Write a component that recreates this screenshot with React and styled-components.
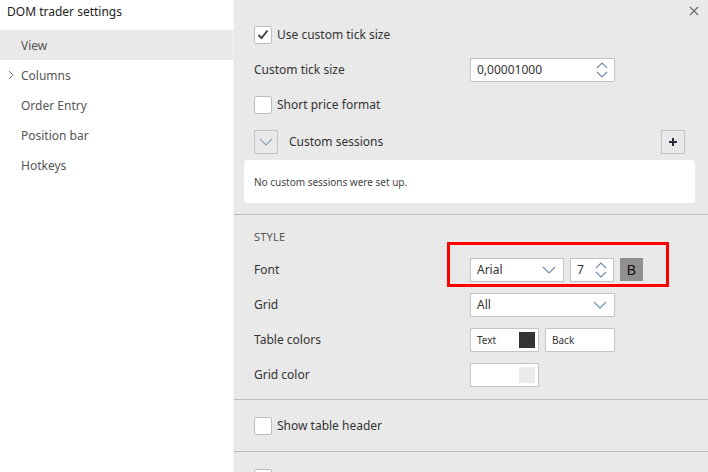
import React from 'react';
import styled, { createGlobalStyle } from 'styled-components';

const GlobalStyle = createGlobalStyle`
  html, body {
    margin: 0;
    padding: 0;
    background: #e9e9e9;
  }
  body {
    font-family: "Noto Sans", "Open Sans", sans-serif;
    color: #333;
  }
`;

const Window = styled.div`
  display: flex;
  width: 708px;
  height: 472px;
  overflow: hidden;
`;

const Sidebar = styled.aside`
  width: 233px;
  flex: none;
  background: #fff;
  border-right: 1px solid #f2f2f2;
`;

const Title = styled.div`
  height: 30px;
  padding: 3px 0 0 7px;
  box-sizing: border-box;
  font-size: 12px;
  color: #222;
`;

const NavItem = styled.div`
  position: relative;
  height: 30px;
  display: flex;
  align-items: center;
  padding-left: 21px;
  font-size: 12px;
  color: #555;
  background: ${p => (p.$active ? '#e9e9e9' : 'transparent')};
`;

const NavChevron = styled.svg`
  position: absolute;
  left: 8px;
  top: 10px;
`;

const Content = styled.main`
  flex: 1;
  position: relative;
  background: #e9e9e9;
`;

const CloseButton = styled.svg`
  position: absolute;
  top: 6px;
  right: 9px;
`;

const Section = styled.section`
  padding: ${p => p.$pad || '0'};
  border-bottom: ${p => (p.$last ? 'none' : '1px solid #bdbdbd')};
`;

const Row = styled.div`
  height: 35px;
  display: flex;
  align-items: center;
  padding-left: 20px;
  padding-right: ${p => (p.$right ? '23px' : '0')};
  margin-top: ${p => p.$mt || 0}px;
  font-size: 12px;
  color: #333;
`;

const Label = styled.div`
  width: 216px;
  flex: none;
`;

const Heading = styled.div`
  height: 16px;
  line-height: 16px;
  padding-left: 20px;
  margin-bottom: 7px;
  font-size: 11px;
  color: #555;
  letter-spacing: 0.2px;
`;

const Check = styled.div`
  width: 18px;
  height: 18px;
  box-sizing: border-box;
  border: 1px solid #bdbdbd;
  border-radius: 2px;
  background: #fff;
  margin-right: 5px;
  display: flex;
  align-items: center;
  justify-content: center;
`;

const Field = styled.div`
  width: ${p => p.$w}px;
  height: 24px;
  box-sizing: border-box;
  border: 1px solid #c4c4c4;
  background: #fff;
  display: flex;
  align-items: center;
  justify-content: space-between;
  padding: 0 ${p => p.$pr || 6}px 0 6px;
  margin-right: ${p => p.$mr || 0}px;
  font-size: ${p => p.$fs || 12}px;
  color: #333;
`;

const Swatch = styled.div`
  width: 16px;
  height: 16px;
  background: ${p => p.$c};
`;

const IconButton = styled.div`
  width: 24px;
  height: 24px;
  box-sizing: border-box;
  border: 1px solid #c4c4c4;
  display: flex;
  align-items: center;
  justify-content: center;
  background: #e9e9e9;
`;

const SessionsLabel = styled.div`
  flex: 1;
  margin-left: 11px;
`;

const EmptyBox = styled.div`
  margin: 1px 13px 0 10px;
  height: 43px;
  background: #fff;
  border-radius: 4px;
  display: flex;
  align-items: center;
  padding-left: 10px;
  font-size: 10px;
  color: #444;
`;

const Highlight = styled.div`
  position: absolute;
  left: 213px;
  top: 13px;
  width: 222px;
  height: 45px;
  box-sizing: border-box;
  border: 3px solid #ff0000;
  pointer-events: none;
`;

const BoldButton = styled.div`
  width: 23px;
  height: 23px;
  background: #909090;
  display: flex;
  align-items: center;
  justify-content: center;
  font-family: "Liberation Sans", Arial, sans-serif;
  font-size: 14px;
  color: #111;
`;

const StyleBlock = styled.div`
  position: relative;
`;

const Spinner = () => (
  <svg width="12" height="18" viewBox="0 0 12 18">
    <path d="M1 7 L6 2 L11 7 M1 11 L6 16 L11 11" fill="none" stroke="#6a8aa8" strokeWidth="1.1" />
  </svg>
);

const ChevronDown = ({ color = '#6a8aa8' }) => (
  <svg width="14" height="8" viewBox="0 0 14 8">
    <path d="M1 1 L7 7 L13 1" fill="none" stroke={color} strokeWidth="1.1" />
  </svg>
);

const navItems = [
  { name: 'View', active: true },
  { name: 'Columns', arrow: true },
  { name: 'Order Entry' },
  { name: 'Position bar' },
  { name: 'Hotkeys' },
];

export default function App() {
  return (
    <>
      <GlobalStyle />
      <Window>
        <Sidebar>
          <Title>DOM trader settings</Title>
          {navItems.map(item => (
            <NavItem key={item.name} $active={item.active}>
              {item.arrow && (
                <NavChevron width="6" height="10" viewBox="0 0 6 10">
                  <path d="M1 1 L5 5 L1 9" fill="none" stroke="#777" strokeWidth="1" />
                </NavChevron>
              )}
              {item.name}
            </NavItem>
          ))}
        </Sidebar>

        <Content>
          <CloseButton width="10" height="10" viewBox="0 0 10 10">
            <path d="M1 1 L9 9 M9 1 L1 9" stroke="#666" strokeWidth="1.1" />
          </CloseButton>

          <Section $pad="17px 0 11px">
            <Row>
              <Check>
                <svg width="12" height="11" viewBox="0 0 12 11">
                  <path d="M1.5 6 L4.5 9 L10.5 1.5" fill="none" stroke="#444" strokeWidth="2" />
                </svg>
              </Check>
              Use custom tick size
            </Row>
            <Row>
              <Label>Custom tick size</Label>
              <Field $w={145}>
                0,00001000
                <Spinner />
              </Field>
            </Row>
            <Row>
              <Check />
              Short price format
            </Row>
            <Row $right $mt={2}>
              <IconButton>
                <ChevronDown color="#8aa0b5" />
              </IconButton>
              <SessionsLabel>Custom sessions</SessionsLabel>
              <IconButton>
                <svg width="10" height="10" viewBox="0 0 10 10">
                  <path d="M5 1 V9 M1 5 H9" stroke="#2a2a3a" strokeWidth="2" />
                </svg>
              </IconButton>
            </Row>
            <EmptyBox>No custom sessions were set up.</EmptyBox>
          </Section>

          <Section $pad="14px 0 7px">
            <StyleBlock>
              <Heading>STYLE</Heading>
              <Row>
                <Label>Font</Label>
                <Field $w={94} $pr={7} $mr={6}>
                  Arial
                  <ChevronDown />
                </Field>
                <Field $w={44} $mr={6}>
                  7
                  <Spinner />
                </Field>
                <BoldButton>B</BoldButton>
              </Row>
              <Row>
                <Label>Grid</Label>
                <Field $w={145} $pr={7}>
                  All
                  <ChevronDown />
                </Field>
              </Row>
              <Row>
                <Label>Table colors</Label>
                <Field $w={69} $pr={3} $mr={6} $fs={10}>
                  Text
                  <Swatch $c="#333" />
                </Field>
                <Field $w={70} $fs={10}>Back</Field>
              </Row>
              <Row>
                <Label>Grid color</Label>
                <Field $w={69} $pr={3}>
                  <span />
                  <Swatch $c="#ebebeb" />
                </Field>
              </Row>
              <Highlight />
            </StyleBlock>
          </Section>

          <Section $pad="8px 0 8px">
            <Row>
              <Check />
              Show table header
            </Row>
          </Section>

          <Section $pad="8px 0 0" $last>
            <Row>
              <Check />
            </Row>
          </Section>
        </Content>
      </Window>
    </>
  );
}
